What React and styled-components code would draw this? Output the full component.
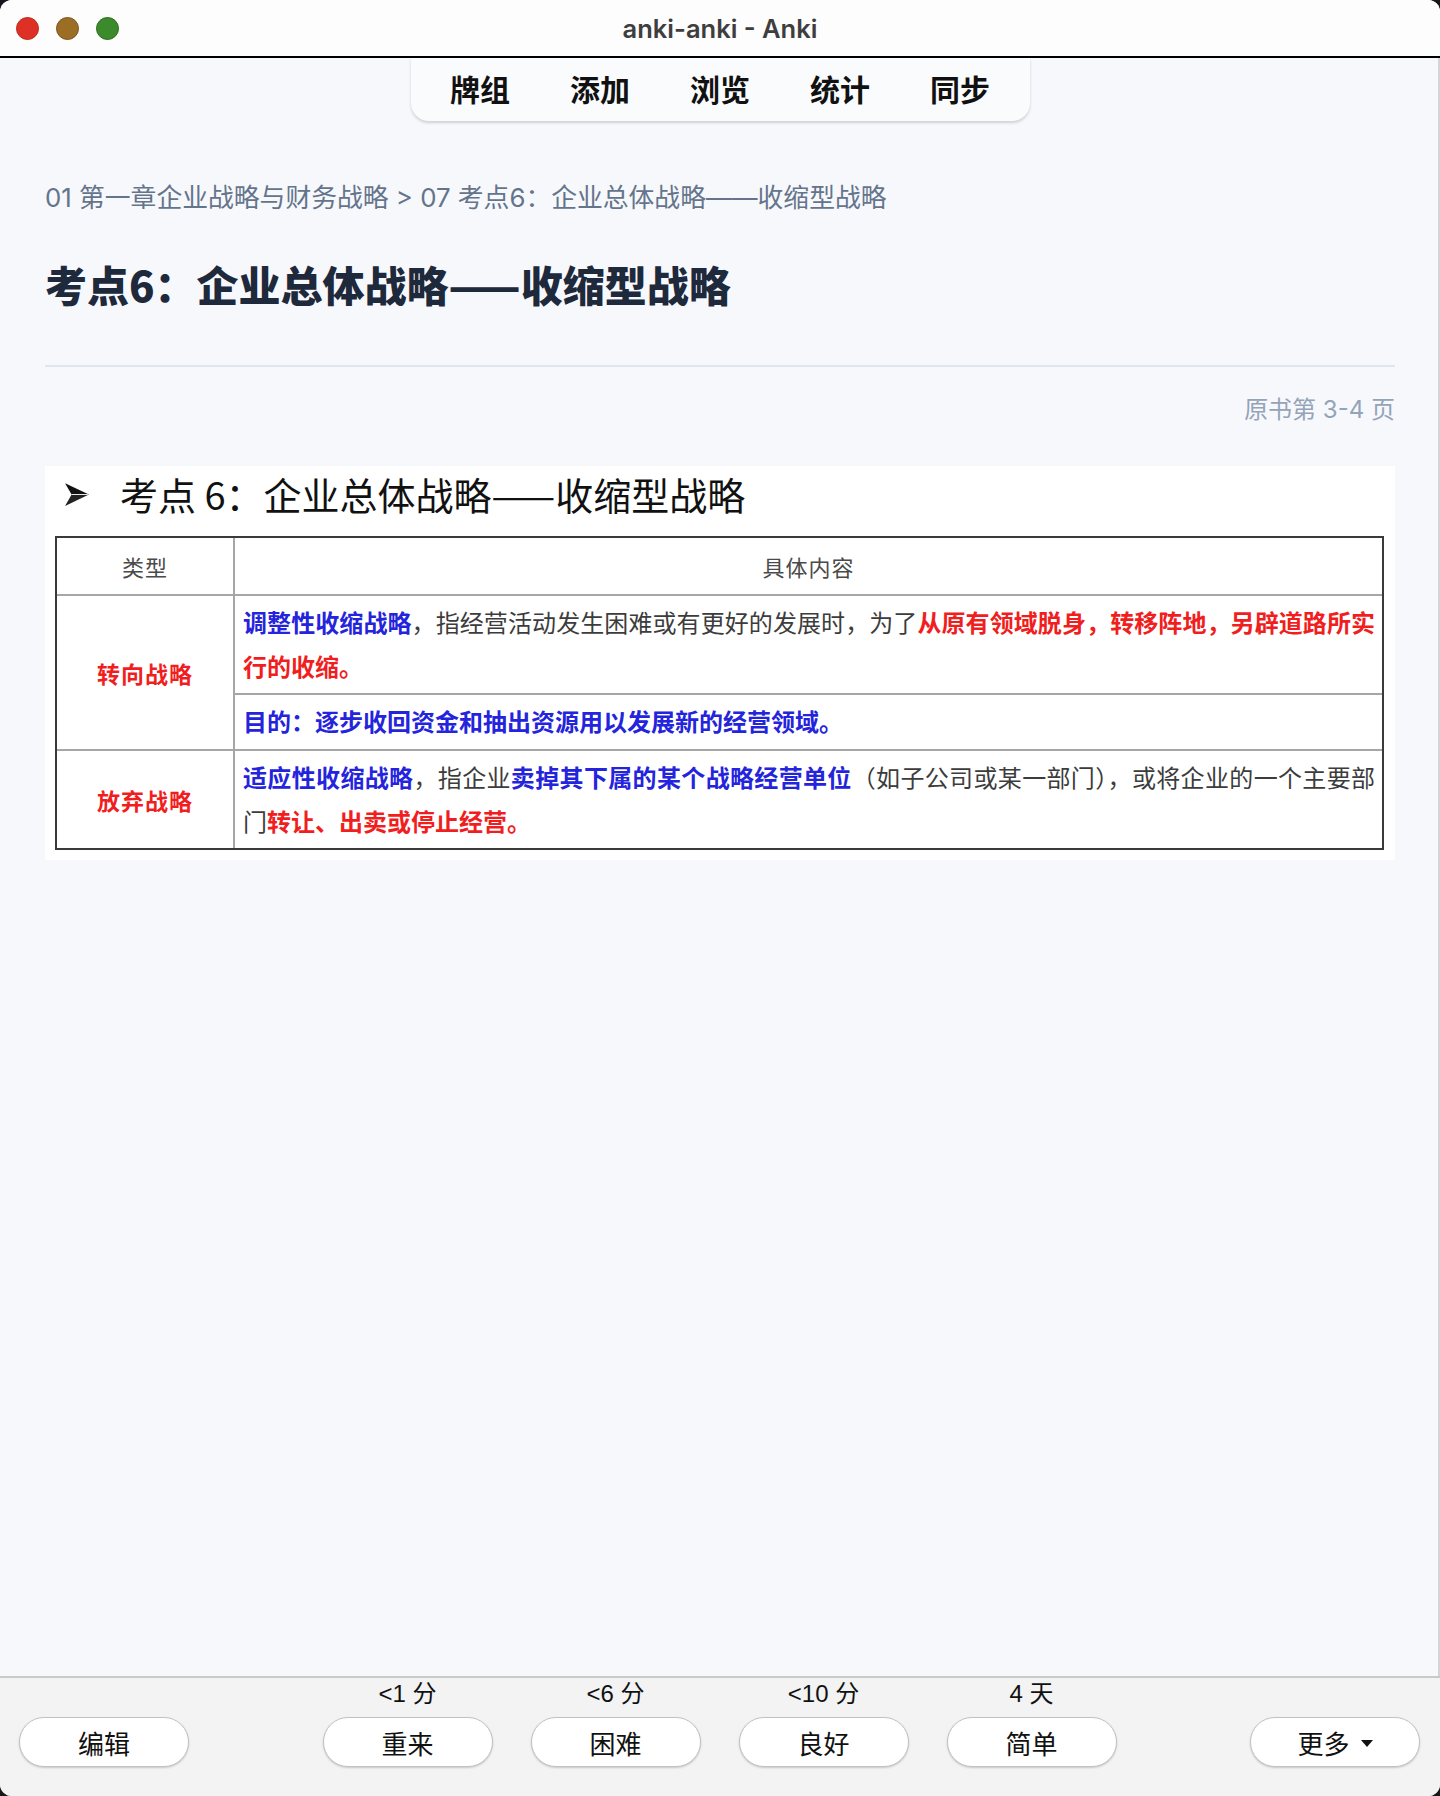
import React from "react";
import styled, { createGlobalStyle } from "styled-components";

const GlobalStyle = createGlobalStyle`
  * { box-sizing: border-box; }
  html, body { margin: 0; padding: 0; background: #15171c; }
  body { width: 1440px; height: 1796px; overflow: hidden; }
`;

const SANS = `Inter, "Noto Sans CJK SC", "Noto Sans", sans-serif`;
const CJK = `"Noto Sans CJK SC", "Noto Sans", sans-serif`;
const UI = `"Liberation Sans", "Noto Sans CJK SC", sans-serif`;

const Window = styled.div`
  width: 1440px;
  height: 1796px;
  border-radius: 12px;
  overflow: hidden;
  display: flex;
  flex-direction: column;
  background: #f7f8fc;
  box-shadow: inset -2px 0 0 #d4d4d4;
`;

const TitleBar = styled.header`
  flex: 0 0 58px;
  background: #fdfdfd;
  border-bottom: 2px solid #000;
  display: grid;
  grid-template-columns: 1fr auto 1fr;
  align-items: center;
  padding: 0 16px;
`;

const Lights = styled.div`
  display: flex;
  gap: 17px;
`;

const Light = styled.span`
  width: 23px;
  height: 23px;
  border-radius: 50%;
  background: ${(p) => p.$bg};
  border: 1px solid ${(p) => p.$edge};
`;

const WindowTitle = styled.div`
  font-family: ${SANS};
  font-weight: 600;
  font-size: 25.5px;
  color: #3e3e3e;
`;

const Main = styled.main`
  flex: 1;
  display: flex;
  flex-direction: column;
  min-height: 0;
`;

const ToolbarWrap = styled.nav`
  display: flex;
  justify-content: center;
`;

const ToolbarPanel = styled.div`
  height: 63px;
  padding: 0 9.5px;
  display: flex;
  align-items: center;
  background: #fafbfd;
  border-radius: 0 0 18px 18px;
  box-shadow: 0 2px 3px rgba(0, 0, 0, 0.16);
`;

const NavItem = styled.span`
  padding: 0 30px;
  font-family: ${CJK};
  font-weight: 700;
  font-size: 30px;
  line-height: 1;
  color: #111;
  margin-top: -4px;
`;

const Content = styled.section`
  padding: 0 45px;
  margin-top: 57px;
  display: flex;
  flex-direction: column;
`;

const Breadcrumb = styled.div`
  font-family: ${SANS};
  font-size: 25.8px;
  line-height: 39px;
  color: #64748b;
`;

const Heading = styled.h1`
  margin: 40px 0 0;
  font-family: ${CJK};
  font-weight: 900;
  font-size: 42px;
  line-height: 54px;
  color: #1e293b;
`;

const Divider = styled.hr`
  margin: 54px 0 0;
  border: 0;
  height: 2px;
  background: #dfe6ef;
`;

const PageRef = styled.div`
  margin-top: 25px;
  text-align: right;
  font-family: ${SANS};
  font-size: 24px;
  line-height: 36px;
  color: #94a3b8;
`;

const Card = styled.div`
  margin-top: 38px;
  background: #fff;
  padding: 4px 11px 10px 10px;
`;

const CardTitle = styled.div`
  display: flex;
  align-items: center;
  gap: 30px;
  padding-left: 9px;
  margin-bottom: 18px;
  font-family: ${CJK};
  font-weight: 400;
  font-size: 38px;
  line-height: 48px;
  color: #111;
`;

const Grid = styled.div`
  display: grid;
  grid-template-columns: 176px 1fr;
  grid-template-rows: 56px 97px 54px 97px;
  gap: 2px;
  background: #a6a6a6;
  border: 2px solid #3a3a3a;
`;

const Cell = styled.div`
  background: #fff;
  display: flex;
  align-items: center;
  justify-content: center;
  grid-row: ${(p) => (p.$span ? `span ${p.$span}` : "auto")};
`;

const HeadText = styled.span`
  font-family: "Liberation Serif", ${CJK};
  font-size: 22px;
  color: #4a4a4a;
  letter-spacing: 1px;
`;

const TypeText = styled.span`
  font-family: ${CJK};
  font-weight: 700;
  font-size: 23px;
  color: #f01e1e;
  letter-spacing: 1px;
`;

const Body = styled.div`
  background: #fff;
  display: flex;
  flex-direction: column;
  justify-content: center;
  padding: 0 7px 0 8px;
  font-family: "Liberation Serif", ${CJK};
  font-size: 24px;
  line-height: 42px;
  color: #3c3c3c;
`;

const Line = styled.span`
  display: block;
  text-align: ${(p) => (p.$full ? "justify" : "left")};
  text-align-last: ${(p) => (p.$full ? "justify" : "left")};
`;

const Mark = styled.span`
  font-family: ${CJK};
  font-weight: 700;
  color: ${(p) => (p.$tone === "red" ? "#f01e1e" : "#2424dc")};
`;

const BottomBar = styled.footer`
  flex: 0 0 120px;
  border-top: 2px solid #c9c9c9;
  background: #f3f3f3;
  display: grid;
  grid-template-columns: 1fr auto 1fr;
  align-items: end;
  padding: 0 20px 29px 19px;
`;

const Answers = styled.div`
  display: flex;
  gap: 38px;
`;

const AnswerCol = styled.div`
  display: flex;
  flex-direction: column;
  align-items: center;
  gap: 10px;
`;

const Due = styled.span`
  font-family: ${UI};
  font-size: 24px;
  line-height: 27px;
  color: #111;
`;

const PillButton = styled.button`
  justify-self: ${(p) => p.$align || "center"};
  width: 170px;
  height: 50px;
  border-radius: 25px;
  background: #fff;
  border: 1.5px solid #c2c2c2;
  box-shadow: 0 1px 2px rgba(0, 0, 0, 0.18);
  display: flex;
  align-items: center;
  justify-content: center;
  gap: 11px;
  padding: 0;
  font-family: ${UI};
  font-size: 26px;
  color: #111;
`;

const Caret = styled.span`
  width: 0;
  height: 0;
  border-left: 6px solid transparent;
  border-right: 6px solid transparent;
  border-top: 7px solid #111;
  margin-top: 2px;
`;

const ArrowHead = () => (
  <svg width="26" height="25" viewBox="0 0 24 23">
    <path d="M1 1 L23 11.5 L7 11.5 Z" fill="#111" />
    <path d="M7 11.5 L23 11.5 L1 22 Z" fill="#222" />
    <path d="M7 11.5 L22 11.5" stroke="#fff" strokeWidth="0.8" />
  </svg>
);

const answers = [
  { due: "<1 分", label: "重来" },
  { due: "<6 分", label: "困难" },
  { due: "<10 分", label: "良好" },
  { due: "4 天", label: "简单" },
];

export default function App() {
  return (
    <>
      <GlobalStyle />
      <Window>
        <TitleBar>
          <Lights>
            <Light $bg="#dd3126" $edge="#c02a20" />
            <Light $bg="#9c6d24" $edge="#7d5519" />
            <Light $bg="#3b8a2b" $edge="#2d6e1f" />
          </Lights>
          <WindowTitle>anki-anki - Anki</WindowTitle>
          <span />
        </TitleBar>
        <Main>
          <ToolbarWrap>
            <ToolbarPanel>
              {["牌组", "添加", "浏览", "统计", "同步"].map((t) => (
                <NavItem key={t}>{t}</NavItem>
              ))}
            </ToolbarPanel>
          </ToolbarWrap>
          <Content>
            <Breadcrumb>01 第一章企业战略与财务战略 &gt; 07 考点6：企业总体战略——收缩型战略</Breadcrumb>
            <Heading>考点6：企业总体战略——收缩型战略</Heading>
            <Divider />
            <PageRef>原书第 3-4 页</PageRef>
            <Card>
              <CardTitle>
                <ArrowHead />
                <span>考点 6：企业总体战略——收缩型战略</span>
              </CardTitle>
              <Grid>
                <Cell>
                  <HeadText>类型</HeadText>
                </Cell>
                <Cell>
                  <HeadText>具体内容</HeadText>
                </Cell>
                <Cell $span={2}>
                  <TypeText>转向战略</TypeText>
                </Cell>
                <Body>
                  <Line $full>
                    <Mark $tone="blue">调整性收缩战略</Mark>，指经营活动发生困难或有更好的发展时，为了
                    <Mark $tone="red">从原有领域脱身，转移阵地，另辟道路所实</Mark>
                  </Line>
                  <Line>
                    <Mark $tone="red">行的收缩。</Mark>
                  </Line>
                </Body>
                <Body>
                  <Line>
                    <Mark $tone="blue">目的：逐步收回资金和抽出资源用以发展新的经营领域。</Mark>
                  </Line>
                </Body>
                <Cell>
                  <TypeText>放弃战略</TypeText>
                </Cell>
                <Body>
                  <Line $full>
                    <Mark $tone="blue">适应性收缩战略</Mark>，指企业
                    <Mark $tone="blue">卖掉其下属的某个战略经营单位</Mark>（如子公司或某一部门），或将企业的一个主要部
                  </Line>
                  <Line>
                    门<Mark $tone="red">转让、出卖或停止经营。</Mark>
                  </Line>
                </Body>
              </Grid>
            </Card>
          </Content>
        </Main>
        <BottomBar>
          <PillButton $align="start">编辑</PillButton>
          <Answers>
            {answers.map((a) => (
              <AnswerCol key={a.label}>
                <Due>{a.due}</Due>
                <PillButton>{a.label}</PillButton>
              </AnswerCol>
            ))}
          </Answers>
          <PillButton $align="end">
            更多
            <Caret />
          </PillButton>
        </BottomBar>
      </Window>
    </>
  );
}
